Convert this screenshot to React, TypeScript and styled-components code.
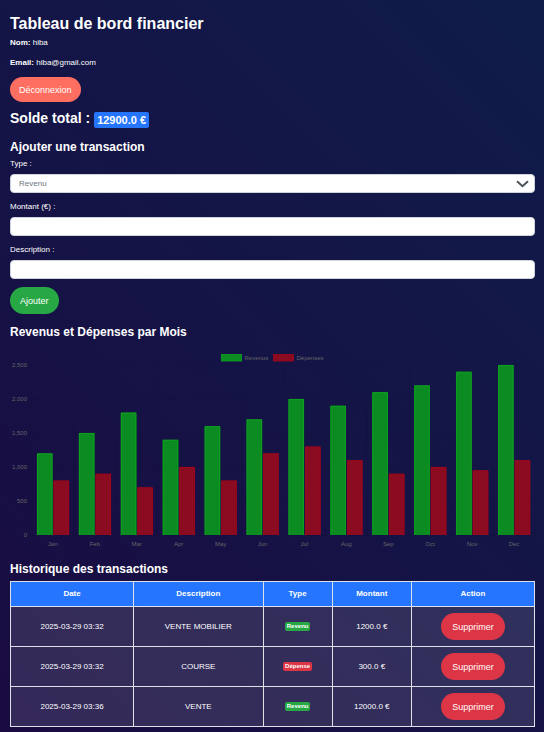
import React from "react";
import styled, { createGlobalStyle } from "styled-components";

const GlobalStyle = createGlobalStyle`
  *, *::before, *::after { box-sizing: border-box; }
  body {
    margin: 0;
    min-height: 100vh;
    background: linear-gradient(45deg, #1a0c42, #0f1c4a);
    color: #fff;
    font: 8px/12px "Liberation Sans", Arial, sans-serif;
  }
`;

const Page = styled.main`
  display: flex;
  flex-direction: column;
  padding: 14px 9px 4px 10px;
`;

const Title = styled.h1`
  margin: 0;
  font-size: 16px;
  line-height: 20px;
`;

const Info = styled.p`
  margin: 3px 0 5px;
`;

const Balance = styled.h2`
  display: flex;
  align-items: center;
  gap: 4px;
  margin: 6px 0 0;
  font-size: 14px;
  line-height: 20px;
`;

const BalanceBadge = styled.span`
  margin-top: 3px;
  padding: 0 3px;
  border-radius: 2px;
  background: #2575ff;
  font-size: 11px;
  line-height: 16px;
`;

const Heading = styled.h3<{ $gap: number }>`
  margin: ${(p) => p.$gap}px 0 0;
  font-size: 12px;
  line-height: 16px;
`;

const Button = styled.button<{ $color: string; $height: number }>`
  align-self: flex-start;
  height: ${(p) => p.$height}px;
  padding: 0 10px;
  border: 0;
  border-radius: 15px;
  background: ${(p) => p.$color};
  color: #fff;
  font: 9px/12px "Liberation Sans", Arial, sans-serif;
  cursor: pointer;
`;

const LogoutButton = styled(Button)`
  margin-top: 3px;
  padding: 0 9px;
`;

const DeleteButton = styled(Button)`
  padding: 0 11px;
`;

const Form = styled.form`
  display: flex;
  flex-direction: column;
  gap: 8px;
  margin-top: 3px;
`;

const Field = styled.div`
  display: grid;
  gap: 4px;
`;

const FieldLabel = styled.label`
  line-height: 12px;
`;

const fieldBox = `
  width: 100%;
  height: 19px;
  padding: 0 8px;
  border: 1px solid #ced4da;
  border-radius: 4px;
  background: #fff;
  color: #6c757d;
  font: 8px/12px "Liberation Sans", Arial, sans-serif;
`;

const TextInput = styled.input`
  ${fieldBox}
`;

const SelectWrap = styled.div`
  position: relative;
  display: grid;
`;

const Select = styled.select`
  ${fieldBox}
  appearance: none;
`;

const Chevron = styled.svg`
  position: absolute;
  right: 6px;
  top: 6px;
  width: 13px;
  height: 8px;
  pointer-events: none;
`;

const ChartSvg = styled.svg`
  display: block;
  width: 100%;
  height: auto;
  margin-top: 4px;
  font: 6px "Liberation Sans", Arial, sans-serif;
  fill: #666;
`;

const Table = styled.table`
  width: 100%;
  margin-top: 4px;
  border-collapse: collapse;
  table-layout: fixed;
  text-align: center;
`;

const HeadCell = styled.th<{ $width: number }>`
  width: ${(p) => p.$width}%;
  height: 25px;
  padding: 0;
  border: 1px solid #dee2e6;
  background: #2575ff;
`;

const Cell = styled.td`
  height: 40px;
  padding: 0;
  border: 1px solid #dee2e6;
  background: rgba(255, 255, 255, 0.12);
`;

const Tag = styled.span<{ $color: string }>`
  display: inline-block;
  padding: 0 2px;
  border-radius: 2px;
  background: ${(p) => p.$color};
  font-size: 6px;
  font-weight: 700;
  line-height: 9px;
  vertical-align: middle;
`;

const months = ["Jan", "Feb", "Mar", "Apr", "May", "Jun", "Jul", "Aug", "Sep", "Oct", "Nov", "Dec"];
const income = [1200, 1500, 1800, 1400, 1600, 1700, 2000, 1900, 2100, 2200, 2400, 2500];
const expenses = [800, 900, 700, 1000, 800, 1200, 1300, 1100, 900, 1000, 950, 1100];
const ticks = [0, 500, 1000, 1500, 2000, 2500];

const PLOT = { left: 22, right: 525, top: 21, bottom: 191 };
const GREEN = { fill: "#0c8b22", stroke: "#0ca91d" };
const RED = { fill: "#8b0b20", stroke: "#a3061a" };

const yOf = (value: number) => PLOT.bottom - (value / 2500) * (PLOT.bottom - PLOT.top);

function Bar({ x, value, color }: { x: number; value: number; color: typeof GREEN }) {
  const y = yOf(value);
  return (
    <g>
      <rect x={x} y={y} width={15.5} height={PLOT.bottom - y} fill={color.fill} />
      <path
        d={`M${x + 0.4} ${PLOT.bottom}V${y + 0.4}h14.7V${PLOT.bottom}`}
        fill="none"
        stroke={color.stroke}
        strokeWidth={0.8}
      />
    </g>
  );
}

function Chart() {
  const step = (PLOT.right - PLOT.left) / months.length;
  return (
    <ChartSvg viewBox="0 0 525 208" role="img" aria-label="Revenus et Dépenses par Mois">
      <rect x={211.5} y={10.5} width={20} height={6.5} fill={GREEN.fill} stroke={GREEN.stroke} strokeWidth={0.8} />
      <text x={234.5} y={15.5}>Revenus</text>
      <rect x={263.5} y={10.5} width={20} height={6.5} fill={RED.fill} stroke={RED.stroke} strokeWidth={0.8} />
      <text x={286.5} y={15.5}>Dépenses</text>
      {ticks.map((t) => (
        <g key={t}>
          <line x1={18} x2={PLOT.right} y1={yOf(t)} y2={yOf(t)} stroke="#000" strokeOpacity={0.1} strokeWidth={0.5} />
          <text x={17} y={yOf(t) + 2} textAnchor="end">{t.toLocaleString("en-US")}</text>
        </g>
      ))}
      {months.map((m, i) => {
        const x = PLOT.left + i * step;
        return (
          <g key={m}>
            <line x1={x} x2={x} y1={PLOT.top} y2={PLOT.bottom + 4} stroke="#000" strokeOpacity={0.1} strokeWidth={0.5} />
            <Bar x={x + 5} value={income[i]} color={GREEN} />
            <Bar x={x + 21.6} value={expenses[i]} color={RED} />
            <text x={x + step / 2} y={PLOT.bottom + 11} textAnchor="middle">{m}</text>
          </g>
        );
      })}
    </ChartSvg>
  );
}

const columns = [
  { name: "Date", width: 23.5 },
  { name: "Description", width: 24.7 },
  { name: "Type", width: 13.2 },
  { name: "Montant", width: 15.1 },
  { name: "Action", width: 23.5 },
];

const transactions = [
  { date: "2025-03-29 03:32", description: "VENTE MOBILIER", type: "Revenu", amount: "1200.0 €" },
  { date: "2025-03-29 03:32", description: "COURSE", type: "Dépense", amount: "300.0 €" },
  { date: "2025-03-29 03:36", description: "VENTE", type: "Revenu", amount: "12000.0 €" },
];

export default function App() {
  return (
    <>
      <GlobalStyle />
      <Page>
        <Title>Tableau de bord financier</Title>
        <Info><b>Nom:</b> hiba</Info>
        <Info><b>Email:</b> hiba@gmail.com</Info>
        <LogoutButton type="button" $color="#ff6f61" $height={25}>Déconnexion</LogoutButton>

        <Balance>Solde total : <BalanceBadge>12900.0 €</BalanceBadge></Balance>

        <Heading $gap={11}>Ajouter une transaction</Heading>
        <Form onSubmit={(e) => e.preventDefault()}>
          <Field>
            <FieldLabel htmlFor="type">Type :</FieldLabel>
            <SelectWrap>
              <Select id="type" defaultValue="Revenu">
                <option>Revenu</option>
                <option>Dépense</option>
              </Select>
              <Chevron viewBox="0 0 13 8" aria-hidden="true">
                <path d="M1 1.2L6.5 6.2L12 1.2" fill="none" stroke="#495057" strokeWidth="1.9" />
              </Chevron>
            </SelectWrap>
          </Field>
          <Field>
            <FieldLabel htmlFor="amount">Montant (€) :</FieldLabel>
            <TextInput id="amount" inputMode="decimal" />
          </Field>
          <Field>
            <FieldLabel htmlFor="description">Description :</FieldLabel>
            <TextInput id="description" />
          </Field>
          <Button type="submit" $color="#28a745" $height={27}>Ajouter</Button>
        </Form>

        <Heading $gap={10}>Revenus et Dépenses par Mois</Heading>
        <Chart />

        <Heading $gap={9}>Historique des transactions</Heading>
        <Table>
          <thead>
            <tr>
              {columns.map((c) => (
                <HeadCell key={c.name} scope="col" $width={c.width}>{c.name}</HeadCell>
              ))}
            </tr>
          </thead>
          <tbody>
            {transactions.map((t, i) => (
              <tr key={i}>
                <Cell>{t.date}</Cell>
                <Cell>{t.description}</Cell>
                <Cell><Tag $color={t.type === "Revenu" ? "#28a745" : "#dc3545"}>{t.type}</Tag></Cell>
                <Cell>{t.amount}</Cell>
                <Cell><DeleteButton type="button" $color="#dc3545" $height={27}>Supprimer</DeleteButton></Cell>
              </tr>
            ))}
          </tbody>
        </Table>
      </Page>
    </>
  );
}
